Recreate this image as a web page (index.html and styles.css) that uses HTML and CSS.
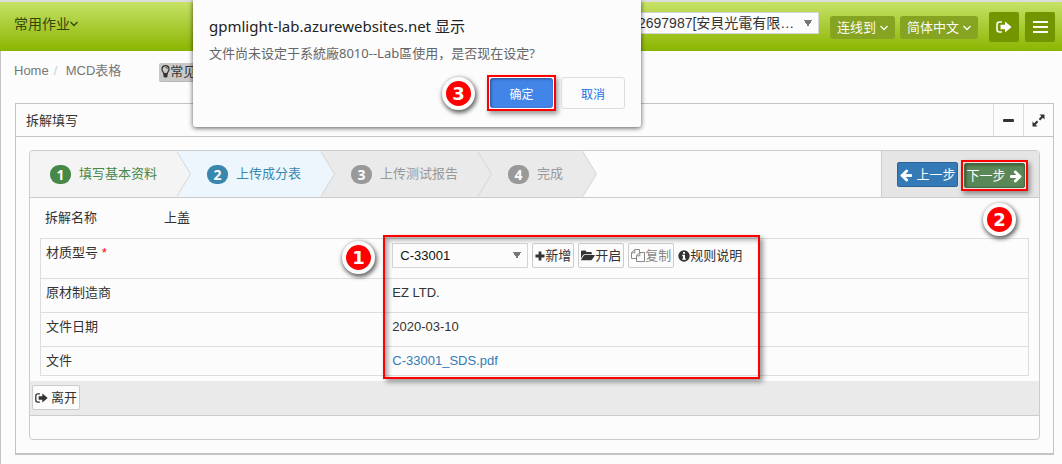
FILE: index.html
```html
<!DOCTYPE html>
<html lang="zh-CN">
<head>
<meta charset="utf-8">
<title>拆解填写</title>
<link rel="stylesheet" href="styles.css">
</head>
<body>
<svg class="sprite" aria-hidden="true">
  <symbol id="chevron" viewBox="0 0 8 6"><path d="M.5 1 4 4.500 7.500 1" fill="none" stroke="currentColor" stroke-width="1.300"/></symbol>
  <symbol id="exit" viewBox="0 0 16 12"><path d="M6 1H3.500Q1 1 1 3.500v5Q1 11 3.500 11H6" fill="none" stroke="currentColor" stroke-width="1.600"/><path d="M4.500 3.800H9V.6L15.600 6 9 11.400V8.200H4.500z" fill="currentColor"/></symbol>
  <symbol id="arrow" viewBox="0 0 1792 1792"><path fill="currentColor" d="M1600 960q0 54-37 91l-651 651q-39 37-91 37-51 0-90-37l-75-75q-38-38-38-91t38-91l293-293H245q-52 0-84-37t-33-91V896q0-53 33-90t84-38h704L656 474q-38-36-38-90t38-90l75-75q38-38 90-38 53 0 91 38l651 651q37 35 37 90z"/></symbol>
  <symbol id="bulb" viewBox="0 0 9 13"><path d="M3 9C3 7.500 1 6.500 1 4.200a3.500 3.500 0 0 1 7 0C8 6.500 6 7.500 6 9z" fill="none" stroke="currentColor" stroke-width="1.200"/><path d="M4.500 2.300Q6.300 2.300 6.400 4" fill="none" stroke="currentColor" stroke-width=".8"/><path d="M2.500 8h4v3.500l-1 1h-2l-1-1z" fill="currentColor"/></symbol>
  <symbol id="plus" viewBox="0 0 10 10"><path d="M3.600.5h2.800v3.100h3.100v2.800H6.400v3.100H3.600V6.400H.5V3.600h3.100z" fill="currentColor"/></symbol>
  <symbol id="folder" viewBox="0 0 14 11"><path d="M0 8.500V1.500Q0 .5 1 .5h3.200q1 0 1 1V2h4.600q1 0 1 1v1.200H3.800q-1 0-1.700.9z" fill="currentColor"/><path d="M3.800 5h9.500q.9 0 .4.700l-2.600 3.900q-.4.600-1.200.6H.6q-.8 0-.3-.7l2.500-3.900q.4-.6 1-.6z" fill="currentColor"/></symbol>
  <symbol id="copy" viewBox="0 0 14 13"><path d="M5.500 9.500h-5V3.800L3.800.5h4.700v3M3.800.5v3.300H.5M5.500 6.800l3.300-3.300h4.700v9h-8zM8.800 3.500v3.300H5.500" fill="none" stroke="currentColor"/></symbol>
  <symbol id="info" viewBox="0 0 12 12"><circle cx="6" cy="6" r="5.700" fill="currentColor"/><path d="M5 2h2v1.700H5zM4.200 4.800H7v3.600h.9v1.400H4.200V8.400H5V6.200h-.8z" fill="#fff"/></symbol>
  <symbol id="expand" viewBox="0 0 13 13"><path d="M7.500.5h5v5l-1.700-1.700-2.600 2.600-1.500-1.500 2.600-2.600zM.5 7.500l1.700 1.700 2.600-2.600 1.500 1.500-2.600 2.600 1.800 1.800H.5z" fill="currentColor"/></symbol>
</svg>

<header class="topbar">
  <button class="menu" type="button">常用作业<svg class="i-chevron"><use href="#chevron"/></svg></button>
  <nav class="topnav">
    <select class="company" aria-label="公司"><option>2697987[安貝光電有限…</option></select>
    <button class="pill" type="button">连线到<svg class="i-chevron"><use href="#chevron"/></svg></button>
    <button class="pill" type="button">简体中文<svg class="i-chevron"><use href="#chevron"/></svg></button>
    <button class="square" type="button" aria-label="退出"><svg class="i-exit"><use href="#exit"/></svg></button>
    <button class="square" type="button" aria-label="菜单"><span class="bars"></span></button>
  </nav>
</header>

<main class="page">
  <div class="crumbs">
    <a href="#">Home</a><span class="slash">/</span><a href="#">MCD表格</a>
    <button class="faq" type="button"><svg class="i-bulb"><use href="#bulb"/></svg>常见</button>
  </div>

  <section class="widget">
    <div class="widget-head">
      <h1>拆解填写</h1>
      <button type="button" aria-label="收起"><span class="minus"></span></button>
      <button type="button" aria-label="展开"><svg class="i-expand"><use href="#expand"/></svg></button>
    </div>

    <div class="wizard">
      <div class="wizard-head">
        <ol class="steps">
          <li class="step done"><span class="num">1</span>填写基本资料</li>
          <li class="step active"><span class="num">2</span>上传成分表</li>
          <li class="step"><span class="num">3</span>上传测试报告</li>
          <li class="step"><span class="num">4</span>完成</li>
        </ol>
        <div class="actions">
          <button class="btn prev" type="button"><svg class="i-arrow flip"><use href="#arrow"/></svg>上一步</button>
          <div class="next-wrap">
            <button class="btn next" type="button">下一步<svg class="i-arrow"><use href="#arrow"/></svg></button>
            <span class="marker marker-next">2</span>
          </div>
        </div>
      </div>

      <div class="name-row"><span class="name-label">拆解名称</span><span>上盖</span></div>

      <div class="detail">
        <table>
          <tr class="tall">
            <th scope="row"><label for="model">材质型号 <span class="req">*</span></label></th>
            <td>
              <div class="controls">
                <select id="model" class="model"><option>C-33001</option></select>
                <button class="tool" type="button"><svg class="i-plus"><use href="#plus"/></svg>新增</button>
                <button class="tool" type="button"><svg class="i-folder"><use href="#folder"/></svg>开启</button>
                <button class="tool" type="button" disabled><svg class="i-copy"><use href="#copy"/></svg>复制</button>
                <span class="hint"><svg class="i-info"><use href="#info"/></svg>规则说明</span>
              </div>
            </td>
          </tr>
          <tr><th scope="row">原材制造商</th><td>EZ LTD.</td></tr>
          <tr><th scope="row">文件日期</th><td>2020-03-10</td></tr>
          <tr class="short"><th scope="row">文件</th><td><a href="#">C-33001_SDS.pdf</a></td></tr>
        </table>
        <div class="frame frame-detail"></div>
        <span class="marker marker-detail">1</span>
      </div>

      <div class="leave-bar"><button class="leave" type="button"><svg class="i-exit"><use href="#exit"/></svg>离开</button></div>
      <div class="wizard-foot"></div>
    </div>
  </section>
</main>

<div class="dialog" role="dialog" aria-labelledby="dialog-title">
  <h2 id="dialog-title">gpmlight-lab.azurewebsites.net 显示</h2>
  <p>文件尚未设定于系統廠8010--Lab區使用，是否现在设定?</p>
  <div class="dialog-actions">
    <span class="marker">3</span>
    <div class="ok-frame"><button class="ok" type="button">确定</button></div>
    <button class="cancel" type="button">取消</button>
  </div>
</div>
</body>
</html>
```
FILE: styles.css
```css
* { box-sizing: border-box; }
body {
  margin: 0;
  background: #fcfcfc;
  color: #333;
  font: 13px/20px "Liberation Sans", "Noto Sans CJK SC", sans-serif;
}
button, select { font: inherit; color: inherit; margin: 0; padding: 0; border: 0; background: none; }
h1, h2, p, ol { margin: 0; padding: 0; font-weight: normal; }
a { color: #337ab7; text-decoration: none; }
svg { flex: none; display: block; }
.sprite { position: absolute; width: 0; height: 0; }
.i-chevron { width: 8px; height: 6px; }
.i-exit { width: 16px; height: 12px; }
.i-arrow { width: 14px; height: 14px; }
.flip { transform: scaleX(-1); }
.i-bulb { width: 9px; height: 13px; }
.i-plus { width: 10px; height: 10px; }
.i-folder { width: 14px; height: 11px; }
.i-copy { width: 14px; height: 13px; }
.i-info { width: 12px; height: 12px; }
.i-expand { width: 13px; height: 13px; }

/* top bar */
.topbar {
  display: flex;
  justify-content: space-between;
  height: 51px;
  padding: 0 7px 0 14px;
  border-top: 2px solid #dcdcdc;
  background: linear-gradient(#c6e267, #8bb500);
}
.menu {
  display: flex;
  align-items: center;
  height: 44px;
  font-size: 14px;
  color: #36450b;
}
.topnav { display: flex; align-items: flex-start; padding-top: 10px; }
select { appearance: none; border: 1px solid #d5d5d5; border-radius: 0; }
.company {
  width: 186px;
  height: 22px;
  margin-right: 11px;
  padding: 0 20px 0 4px;
  font-size: 14px;
  line-height: 20px;
}
.company, .model {
  background:
    linear-gradient(to bottom right, #777 50%, transparent 50%) right 6px center / 4px 7px no-repeat,
    linear-gradient(to bottom left, #777 50%, transparent 50%) right 10px center / 4px 7px no-repeat,
    #fcfcfc;
}
.pill {
  display: flex;
  align-items: center;
  gap: 4px;
  height: 23px;
  margin: 4px 5px 0 0;
  padding: 0 7px;
  border-radius: 3px;
  background: #86a322;
  color: #fcfcfc;
}
.square {
  display: flex;
  align-items: center;
  justify-content: center;
  width: 30px;
  height: 30px;
  margin-left: 6px;
  border-radius: 2px;
  background: #739600;
  color: #fcfcfc;
}
.bars {
  width: 15px;
  height: 12px;
  border-top: 2px solid;
  border-bottom: 2px solid;
  background: linear-gradient(#fcfcfc, #fcfcfc) center / 100% 2px no-repeat;
}

/* page */
.page { padding: 9px 8px 9px 14px; border-left: 1px solid #c4c4c4; }
.crumbs { display: flex; align-items: center; height: 22px; margin-left: -1px; }
.crumbs a { color: #777; }
.slash { width: 17px; padding-left: 5px; color: #ccc; }
.faq {
  display: flex;
  align-items: center;
  width: 60px;
  height: 19px;
  margin: 2px 0 0 38px;
  padding-left: 2px;
  border-radius: 2px;
  background: #c9c9c9;
  border-bottom: 1px solid #b8b8b8;
}
.widget {
  margin-top: 21px;
  border: 1px solid #c4c4c4;
  border-bottom-width: 2px;
}
.widget-head { display: flex; height: 33px; border-bottom: 1px solid #c4c4c4; }
.widget-head h1 { flex: 1; padding: 7px 10px 0; font-size: 13px; line-height: 20px; }
.widget-head button {
  display: flex;
  align-items: center;
  justify-content: center;
  width: 30px;
  border-left: 1px solid #ddd;
}
.minus { width: 11px; height: 3px; border-radius: 1px; background: #333; }

/* wizard */
.wizard { margin: 13px; border: 1px solid #ccc; border-radius: 4px; }
.wizard-head { display: flex; justify-content: space-between; height: 47px; border-bottom: 1px solid #ccc; }
.steps { display: flex; list-style: none; color: #999; }
.step {
  --fill: #eaeaea;
  position: relative;
  display: flex;
  align-items: center;
  padding: 0 20px 0 30px;
  background: var(--fill);
}
.step::before, .step::after {
  content: "";
  position: absolute;
  z-index: 1;
  top: 0;
  left: 100%;
  border: 23px solid transparent;
  border-left: 14px solid #d4d4d4;
  border-right: 0;
}
.step::after { left: calc(100% - 1px); border-left-color: var(--fill); }
.done { --fill: #f4f4f4; padding-left: 20px; color: #468847; border-radius: 4px 0 0; }
.active { --fill: #edf6fd; color: #3a87ad; }
.num {
  width: 21px;
  height: 19px;
  margin-right: 8px;
  border-radius: 9px;
  background: #999;
  color: #fcfcfc;
  font: bold 14px/19px "Open Sans", sans-serif;
  text-align: center;
}
.done .num { background: #468847; }
.active .num { background: #3a87ad; }
.actions {
  display: flex;
  gap: 5px;
  align-items: flex-start;
  padding: 11px 11px 0 15px;
  border-left: 1px solid #ccc;
  border-radius: 0 4px 0 0;
  background: #e5e5e5;
}
.btn {
  display: flex;
  align-items: center;
  justify-content: center;
  gap: 3px;
  width: 61px;
  height: 25px;
  border: 1px solid #2a659a;
  border-radius: 2px;
  background: #337ab7;
  color: #fcfcfc;
}
.next { border-color: #456b44; background: #5a8757; box-shadow: inset 1px 1px 3px #0006; }
.next-wrap {
  position: relative;
  margin: -2px 0 0 -2px;
  padding: 1px;
  border: 2px solid #f00;
  box-shadow: 2px 3px 5px #0006;
}

/* details */
.name-row { display: flex; padding: 10px 15px; }
.name-label { width: 119px; }
.detail { position: relative; margin: 0 10px 5px; }
table { width: 100%; border-collapse: collapse; border: 1px solid #ddd; }
th, td {
  height: 34px;
  padding: 4px 5px 0;
  border-top: 1px solid #ddd;
  font-weight: normal;
  text-align: left;
  vertical-align: top;
}
th { width: 35%; }
td { padding-left: 6px; }
.tall th, .tall td { height: 40px; }
.short th, .short td { height: 29px; }
.req { color: #f00; }
.controls { display: flex; align-items: center; gap: 4px; }
.model { width: 136px; height: 25px; padding: 0 20px 0 7px; color: #111; }
.tool, .leave {
  display: flex;
  align-items: center;
  height: 25px;
  padding: 0 2px;
  border: 1px solid #ccc;
  border-radius: 2px;
  background: #fcfcfc;
  white-space: nowrap;
}
.tool:disabled { color: #888; }
.hint { display: flex; align-items: center; }
.leave-bar { height: 35px; padding: 4px 2px; border-bottom: 1px solid #ccc; background: #eaeaea; }
.leave { gap: 3px; }
.leave .i-exit { width: 13px; height: 10px; }
.wizard-foot { height: 23px; }

/* highlights and numbered markers */
.frame { position: absolute; border: 2px solid #f00; pointer-events: none; }
.frame-detail {
  top: -3px;
  left: 343px;
  width: 377px;
  height: 144px;
  box-shadow: 3px 3px 5px #0006, inset 3px 3px 5px #0005;
}
.marker {
  flex: none;
  width: 33px;
  height: 33px;
  border: 4px solid #fcfcfc;
  border-radius: 50%;
  background: #f00;
  box-shadow: 1px 2px 4px 1px #0009;
  color: #fcfcfc;
  font: bold 18px/25px "DejaVu Sans", sans-serif;
  text-align: center;
}
.marker-detail { position: absolute; top: 3px; left: 302px; }
.marker-next { position: absolute; z-index: 2; top: 41px; left: 20px; }

/* browser dialog */
.dialog {
  position: absolute;
  z-index: 5;
  top: 0;
  left: 193px;
  width: 448px;
  height: 127px;
  padding: 15px 16px;
  border-radius: 0 0 3px 3px;
  background: #fcfcfc;
  box-shadow: 0 1px 5px #000a;
  font-family: "Noto Sans", "Noto Sans CJK SC", sans-serif;
}
.dialog h2 { font-size: 15px; line-height: 22px; color: #222; }
.dialog p { margin-top: 6px; color: #666; }
.dialog-actions {
  display: flex;
  align-items: center;
  justify-content: flex-end;
  gap: 5px;
  margin-top: 12px;
  font-family: "Liberation Sans", "Noto Sans CJK SC", sans-serif;
}
.dialog-actions .marker { margin-right: 7px; }
.ok-frame { padding: 1px; border: 2px solid #f00; box-shadow: 2px 3px 5px #0006; }
.ok, .cancel { border-radius: 3px; font-size: 12px; }
.ok {
  display: block;
  width: 63px;
  height: 30px;
  padding-top: 3px;
  background: #4285e8;
  color: #fcfcfc;
  box-shadow: inset 1px 1px 3px #0006;
}
.cancel { width: 64px; height: 32px; padding-top: 3px; border: 1px solid #ddd; color: #1a73e8; }
```
